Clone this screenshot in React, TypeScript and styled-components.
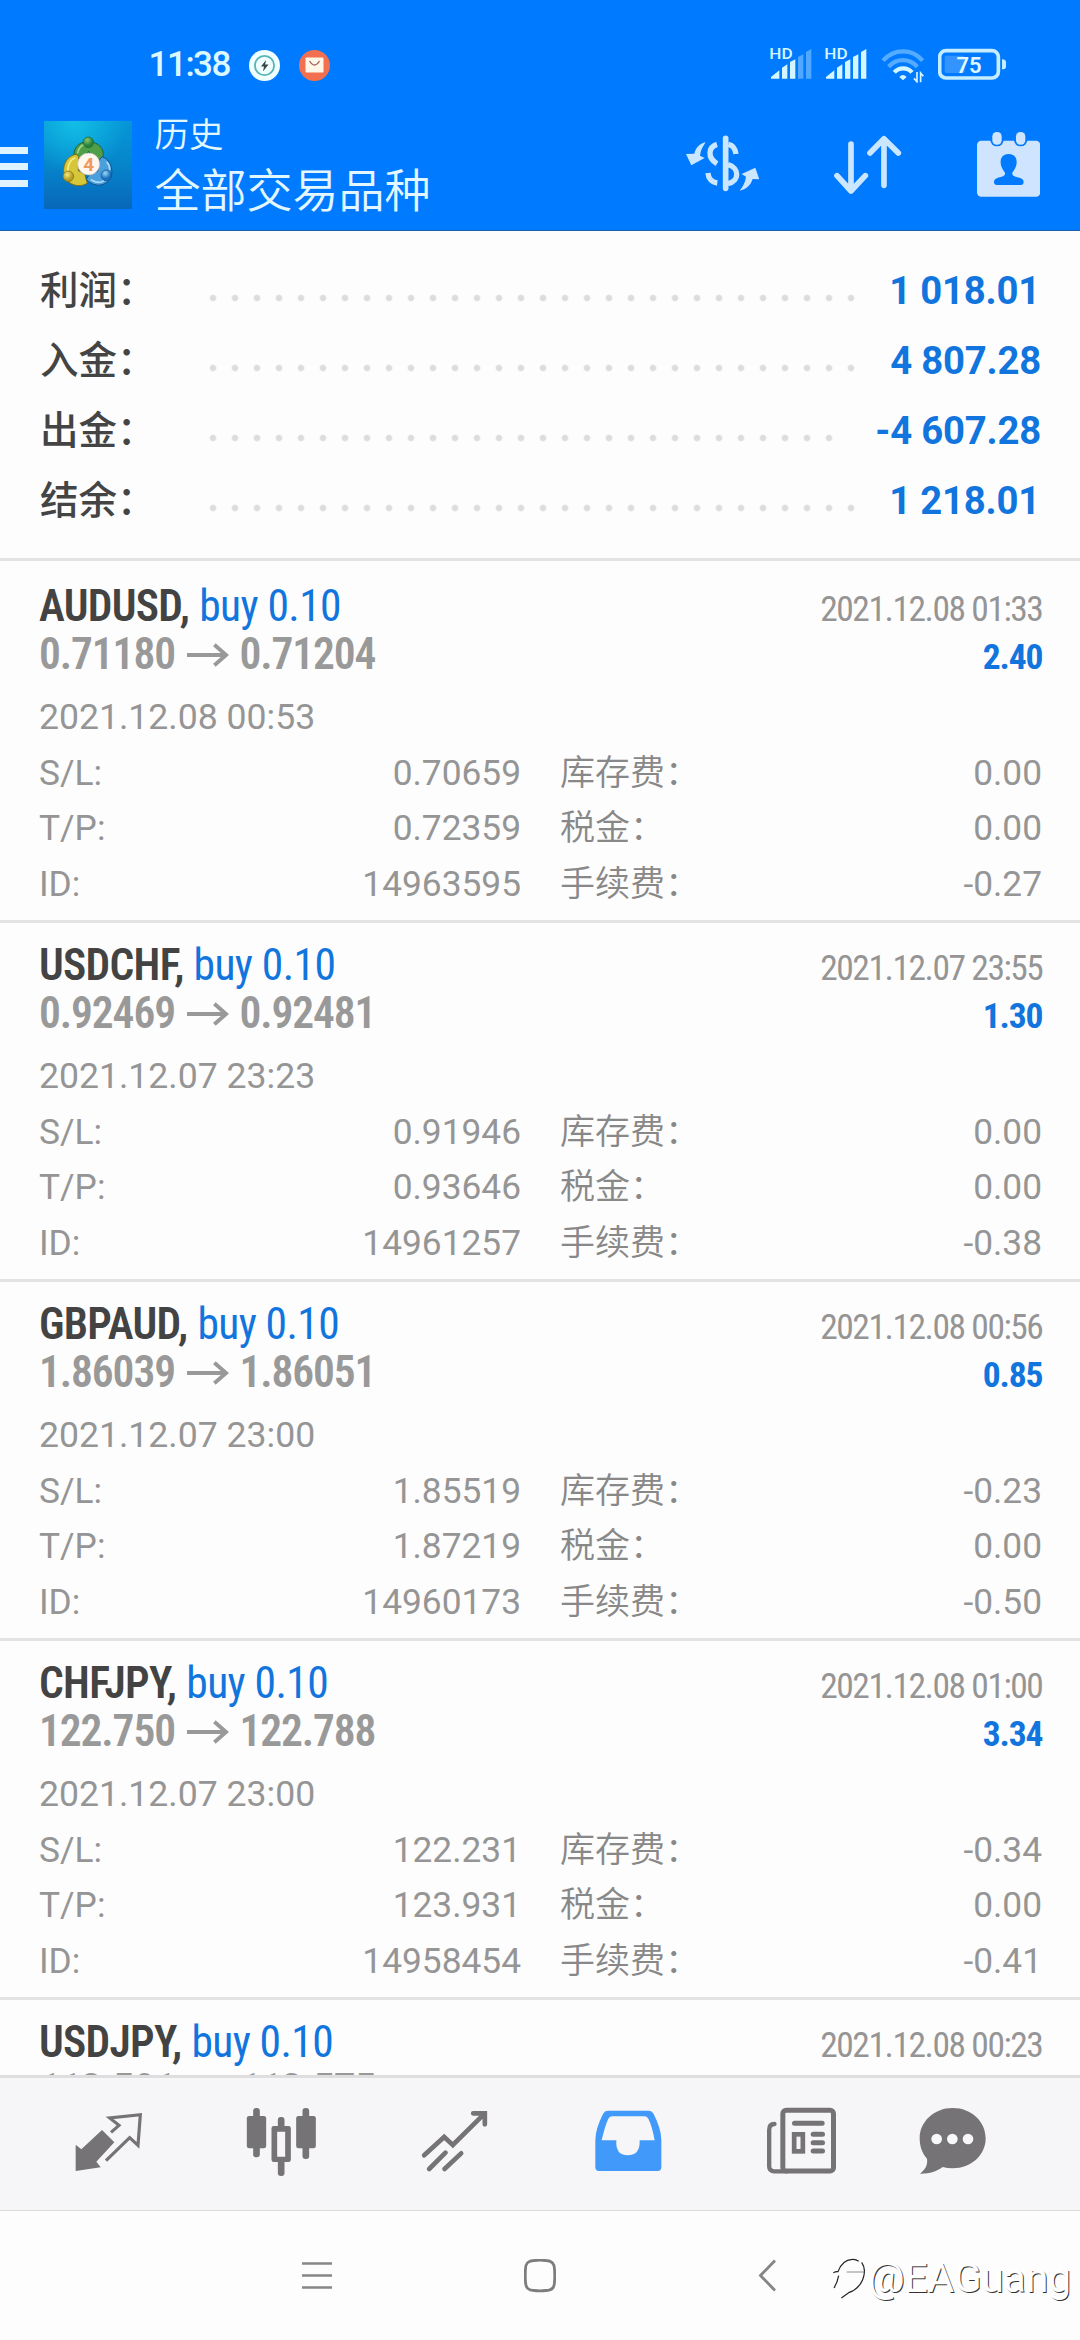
import React from "react";
import styled, { createGlobalStyle } from "styled-components";

const SANS = '"Roboto", "Noto Sans CJK SC", sans-serif';
const CONDENSED = '"Roboto Condensed", "Roboto", "Noto Sans CJK SC", sans-serif';
const BLUE = "#1175dd";
const GREY = "#959595";
const ICON = "#757375";
const PALE = "#cbe6ff";

const GlobalStyle = createGlobalStyle`
  * { box-sizing: border-box; }
  body { margin: 0; background: #fdfdfd; font-family: ${SANS}; }
  svg { display: block; flex: none; }
`;

const Screen = styled.div`
  position: relative;
  display: flex;
  flex-direction: column;
  width: 1080px;
  height: 2340px;
  overflow: hidden;
  background: #fdfdfd;
`;

const Header = styled.header`
  flex: none;
  height: 231px;
  background: #007aff;
  border-bottom: 1px solid #1a62ad;
`;

const StatusBar = styled.div`
  display: flex;
  align-items: center;
  justify-content: space-between;
  height: 102px;
  padding: 28px 73px 0 148.6px;
`;

const StatusGroup = styled.div<{ $gap: number }>`
  display: flex;
  align-items: center;
  gap: ${(p) => p.$gap}px;
`;

const Clock = styled.span`
  width: 81px;
  font: 500 35px/40px ${SANS};
  letter-spacing: -1.5px;
  white-space: nowrap;
  color: #dcf8ff;
`;

const Toolbar = styled.div`
  display: flex;
  height: 128px;
  padding-right: 40px;
`;

const MenuButton = styled.div`
  display: flex;
  flex-direction: column;
  gap: 9.3px;
  width: 28px;
  margin: 44.5px 16px 0 0;
`;

const MenuBar = styled.span`
  height: 7.3px;
  background: #dff4ff;
`;

const LogoBox = styled.div`
  width: 88px;
  height: 88px;
  margin: 19px 22.5px 0 0;
`;

const Titles = styled.div`
  flex: 1;
  padding-top: 6px;
  color: #e2f7ff;
`;

const Subtitle = styled.div`
  font: 350 34.5px/49px ${SANS};
  font-family: "Noto Sans CJK SC", sans-serif;
`;

const Title = styled.div`
  font: 350 46px/60px ${SANS};
  font-family: "Noto Sans CJK SC", sans-serif;
`;

const Actions = styled.div`
  display: flex;
  padding-top: 28px;
  gap: 75px;
`;

const Summary = styled.section`
  flex: none;
  height: 330px;
  padding: 24.5px 39px 0 40px;
  border-bottom: 3px solid #e3e3e3;
`;

const SummaryRow = styled.div`
  display: flex;
  height: 70px;
  line-height: 70px;
`;

const SummaryLabel = styled.span`
  width: 162px;
  font-size: 38.5px;
  font-weight: 500;
  color: #444;
`;

const Dots = styled.span<{ $count: number }>`
  width: ${(p) => p.$count * 22}px;
  height: 22px;
  margin-top: 31px;
  background: radial-gradient(circle at center, #dcdcdc 2.4px, transparent 4px) 0 0 / 22px 22px repeat-x;
`;

const SummaryValue = styled.span<{ $inset: number }>`
  flex: 1;
  padding-right: ${(p) => p.$inset}px;
  text-align: right;
  white-space: nowrap;
  font-size: 38.3px;
  font-weight: 700;
  letter-spacing: -0.2px;
  color: ${BLUE};
`;

const DealList = styled.main`
  height: 1514px;
  padding-top: 3px;
  overflow: hidden;
`;

const Deal = styled.article`
  height: 359px;
  padding: 18.5px 39px 0;
  border-bottom: 3px solid #e3e3e3;
`;

const DealLine = styled.div`
  display: flex;
  align-items: baseline;
  justify-content: space-between;
  height: 48px;
  font-family: ${CONDENSED};
  font-size: 43.5px;
  line-height: 48px;
  white-space: nowrap;
`;

const Symbol = styled.span`
  font-weight: 600;
  letter-spacing: -0.7px;
  color: #434343;
`;

const Side = styled.span`
  letter-spacing: -0.6px;
  color: ${BLUE};
`;

const Prices = styled.span`
  display: flex;
  align-items: baseline;
  font-weight: 600;
  letter-spacing: -1.1px;
  color: #999;
`;

const ArrowIcon = styled.svg`
  margin: 0 10.5px 0 12px;
  align-self: center;
`;

const CloseTime = styled.span`
  font-size: 35.5px;
  letter-spacing: -1.45px;
  margin-right: -1.45px;
  color: ${GREY};
`;

const Profit = styled.span`
  font-size: 35.5px;
  font-weight: 700;
  letter-spacing: -1.2px;
  margin-right: -1.2px;
  color: ${BLUE};
`;

const OpenTime = styled.div`
  margin-top: 10.5px;
  font-size: 35.6px;
  line-height: 56px;
  color: ${GREY};
`;

const Details = styled.div`
  display: grid;
  grid-template-columns: 482px 482px;
  column-gap: 39px;
  padding-top: 0.5px;
  font-size: 35.3px;
  line-height: 55.6px;
  color: ${GREY};
`;

const Detail = styled.div`
  display: flex;
  justify-content: space-between;
  height: 55.6px;
`;

const ChargeLabel = styled.span`
  font-size: 35px;
  font-weight: 350;
  color: #888;
`;

const TabBar = styled.nav`
  display: flex;
  align-items: center;
  flex: none;
  height: 136px;
  padding: 0 0 4px 22px;
  background: #f6f5f7;
  border-top: 3px solid #dededf;
  border-bottom: 1px solid #dcdcdc;
`;

const Tab = styled.div<{ $width: number }>`
  display: flex;
  justify-content: center;
  width: ${(p) => p.$width}px;
`;

const SystemBar = styled.footer`
  display: flex;
  align-items: center;
  flex: 1;
  padding-left: 301px;
`;

const SystemKey = styled.div<{ $gap: number }>`
  margin-right: ${(p) => p.$gap}px;
`;

const Watermark = styled.div`
  position: absolute;
  right: 9px;
  bottom: 37px;
  display: flex;
  align-items: center;
  gap: 3px;
  font: 400 40.500px/50px ${SANS};
  color: #fff;
  text-shadow: 1px 1px 0.500px #333;
`;

const Signal = ({ strong }: { strong?: boolean }) => (
  <svg width="42" height="36.7" viewBox="386 80 126 110" fill="#d4f6ff">
    <text x="384" y="117" fontSize="43" fontWeight="500" fontFamily="Roboto" textLength="70" lengthAdjust="spacingAndGlyphs">HD</text>
    <path d="M389 175V170L414 150V175ZM422 175V142L438 132V175ZM446 175V125L462 117V175Z" />
    <path opacity={strong ? 1 : 0.38} d="M470 175V110L486 102V175ZM494 175V95L510 86V175Z" />
  </svg>
);

const Wifi = () => (
  <svg width="43.3" height="36.7" viewBox="718 80 130 110" fill="none" stroke="#d4f6ff" strokeWidth="13" >
    <g opacity="0.4"><path d="M724 121C757 84 811 84 843 121" /><path d="M741 139C765 113 802 113 827 139" /></g>
    <path d="M758 156C772 140 797 140 811 156" />
    <path d="M773 170Q784 158 795 170L784 180Z" fill="#d4f6ff" stroke="none" />
    <path strokeWidth="5" d="M826 155V184L817 174M837 186V158L845 168" />
  </svg>
);

const Battery = () => (
  <svg width="68.7" height="36.7" viewBox="894 80 206 110">
    <rect x="899" y="91" width="176" height="82" rx="19" fill="none" stroke="#c4edff" strokeWidth="11" />
    <rect x="914" y="106" width="60" height="52" rx="5" fill="#3394ff" />
    <path d="M1086 117Q1098 117 1098 126V139Q1098 147 1086 147Z" fill="#c4edff" />
    <text x="987" y="158" fontSize="66" fontWeight="600" fontFamily="Roboto" textAnchor="middle" fill="#e2f8ff">75</text>
  </svg>
);

const ChargeBadge = () => (
  <svg width="31" height="31" viewBox="0 0 31 31">
    <circle cx="15.5" cy="15.5" r="15.5" fill="#f0ffff" />
    <circle cx="15.5" cy="15.5" r="9.6" fill="none" stroke="#5ab4b4" strokeWidth="1.8" />
    <path d="M17 10L12 16.5H15L14 21.5L19.5 14.5H16.2Z" fill="#3b4648" />
  </svg>
);

const ShopBadge = () => (
  <svg width="31" height="31" viewBox="0 0 31 31">
    <circle cx="15.5" cy="15.5" r="15.5" fill="#f2704f" />
    <rect x="6.5" y="7.5" width="18" height="15" rx="1" fill="#fff6ea" />
    <path d="M10.5 11Q15.5 19 20.5 11" fill="none" stroke="#a4645a" strokeWidth="1.3" />
  </svg>
);

const Logo = () => (
  <svg width="88" height="88" viewBox="42 33 264 264">
    <defs>
      <linearGradient id="sky" x1="0" y1="0" x2="0" y2="1"><stop offset="0" stopColor="#0696d6" /><stop offset="0.5" stopColor="#0685cb" /><stop offset="1" stopColor="#0867b9" /></linearGradient>
      <radialGradient id="glow" cx="0.35" cy="0" r="0.6"><stop offset="0" stopColor="#12bfe6" /><stop offset="1" stopColor="#12bfe6" stopOpacity="0" /></radialGradient>
      <radialGradient id="green" cx="0.4" cy="0.3"><stop offset="0" stopColor="#8cc76d" /><stop offset="1" stopColor="#28813c" /></radialGradient>
      <radialGradient id="gold" cx="0.4" cy="0.35"><stop offset="0" stopColor="#f3e978" /><stop offset="1" stopColor="#b39a22" /></radialGradient>
      <radialGradient id="azure" cx="0.4" cy="0.3"><stop offset="0" stopColor="#9bd8f7" /><stop offset="1" stopColor="#1971be" /></radialGradient>
    </defs>
    <rect x="42" y="33" width="264" height="264" fill="url(#sky)" />
    <rect x="42" y="33" width="264" height="264" fill="url(#glow)" />
    <g strokeWidth="3">
      <path d="M136 152C122 118 146 94 176 95S229 118 216 152L200 160L176 124L150 158Z" fill="#4f9f48" stroke="#1d6434" />
      <path d="M139 133C106 137 91 178 108 207C124 231 158 231 172 219L164 192L145 182L146 140Z" fill="#d6c63a" stroke="#7e6c17" />
      <path d="M216 140C246 150 254 192 236 212C217 233 185 228 169 208L180 190L203 184L208 150Z" fill="#4a9fdc" stroke="#14508d" />
    </g>
    <g fill="none" strokeWidth="5" strokeLinecap="round">
      <path d="M143 128Q149 107 163 104" stroke="#a5d68a" />
      <path d="M113 183Q115 151 134 144" stroke="#f7ed86" />
      <path d="M231 157Q239 165 239 178M184 210Q203 222 221 213" stroke="#a8dbf7" />
    </g>
    <circle cx="175" cy="97" r="16" fill="url(#green)" stroke="#1d6434" strokeWidth="2" />
    <circle cx="115" cy="199" r="16" fill="url(#gold)" stroke="#7e6c17" strokeWidth="2" />
    <circle cx="229" cy="196" r="16" fill="url(#azure)" stroke="#14508d" strokeWidth="2" />
    <circle cx="176" cy="162" r="33" fill="#fff6ee" stroke="#c9bba9" strokeWidth="2" />
    <text x="176" y="182" textAnchor="middle" fontFamily="Roboto" fontWeight="700" fontSize="57" fill="#ef9a5d">4</text>
  </svg>
);

const CurrencyIcon = () => (
  <svg width="73.300" height="68" viewBox="136 330 220 204" fill="none" stroke={PALE} strokeWidth="15">
    <path d="M255 355V505" strokeWidth="17" strokeLinecap="round" />
    <path d="M229 373C203 381 199 413 229 431M263 373C275 375 284 386 286 402M262 434C296 442 298 484 262 491M202 459C203 475 213 487 230 489" strokeWidth="16" />
    <path stroke="none" fill={PALE} d="M195 367C177 371 165 383 161 401L136 402L152 436L192 414L178 407C180 391 186 380 195 367ZM297 512C316 508 330 497 336 477L356 478L344 443L303 462L316 470C314 488 306 501 297 512Z" />
  </svg>
);

const SortIcon = () => (
  <svg width="67.300" height="68" viewBox="575 330 202 204" fill="none" stroke={PALE} strokeWidth="17" strokeLinecap="round" strokeLinejoin="round">
    <path d="M626 372V510M584 467L626 513L669 467M725 496V358M683 399L725 356L768 399" />
  </svg>
);

const CalendarIcon = () => (
  <svg width="63.300" height="68" viewBox="1009 330 190 204">
    <rect x="1009" y="362" width="190" height="168" rx="13" fill="#cfe4ff" />
    <g fill="#007aff">
      <rect x="1049" y="330" width="40" height="49" rx="19" />
      <rect x="1120" y="330" width="40" height="49" rx="19" />
      <path d="M1104 402C1123 402 1129 415 1128 430C1127 443 1119 452 1115 458C1113 466 1121 470 1131 472Q1149 475 1149 486Q1149 495 1140 495H1069Q1060 495 1060 486Q1060 475 1077 472C1087 470 1095 466 1093 458C1089 452 1081 443 1080 430C1079 415 1085 402 1104 402Z" />
    </g>
    <g fill="#cfe4ff"><rect x="1055" y="336" width="28" height="38" rx="13" /><rect x="1126" y="336" width="28" height="38" rx="13" /></g>
  </svg>
);

const QuotesIcon = () => (
  <svg width="75" height="75" viewBox="93 135 225 225">
    <path d="M107 254L124 268L186 210L223 247L169 305L182 322L107 333Z" fill={ICON} />
    <path d="M213 217L237 196L209 174L301 164L294 256L269 233L198 302" fill="none" stroke={ICON} strokeWidth="9.500" />
  </svg>
);

const ChartIcon = () => (
  <svg width="75" height="75" viewBox="611.5 135 225 225" fill={ICON}>
    <rect x="639" y="144" width="20" height="148" rx="9" /><rect x="620" y="168" width="58" height="97" rx="7" />
    <rect x="787" y="144" width="20" height="153" rx="9" /><rect x="768" y="168" width="59" height="97" rx="7" />
    <rect x="713" y="171" width="20" height="40" rx="9" /><rect x="713" y="295" width="20" height="53" rx="9" />
    <path fillRule="evenodd" d="M701 198H745Q752 198 752 205V299Q752 306 745 306H701Q694 306 694 299V205Q694 198 701 198ZM711 215V290H735V215Z" />
  </svg>
);

const TrendIcon = () => (
  <svg width="75" height="75" viewBox="1129.5 135 225 225" fill="none" stroke={ICON} strokeWidth="14" strokeLinecap="round">
    <path d="M1151 286L1211 231L1237 255L1329 164M1298 160H1333V193M1166 327L1215 278M1212 327L1262 280" />
  </svg>
);

const InboxIcon = () => (
  <svg width="75" height="75" viewBox="31 45 225 225" fill="#419af9">
    <path fillRule="evenodd" d="M82 62H203Q214 62 219 72Q242 117 242 151V232Q242 243 231 243H55Q44 243 44 232V151Q44 117 67 72Q72 62 82 62ZM95 79Q87 79 83 86Q73 107 63 151H107Q104 196 141 196Q179 196 177 151H222Q214 107 203 86Q199 79 191 79Z" />
  </svg>
);

const NewsIcon = () => (
  <svg width="75" height="75" viewBox="551.5 45 225 225" fill="none" stroke={ICON} strokeLinecap="round">
    <rect x="608" y="61" width="152" height="182" rx="10" strokeWidth="15" />
    <path strokeWidth="13" d="M583 102Q567 102 567 120V229Q567 243 581 244H620" />
    <path strokeWidth="15" d="M643 100H726M699 133H727M699 158H727M699 183H727" />
    <rect x="642" y="133" width="26" height="51" strokeWidth="14" />
  </svg>
);

const ChatIcon = () => (
  <svg width="75" height="75" viewBox="1006 45 225 225">
    <path fill={ICON} d="M1119 54C1176 54 1218 95 1218 145C1218 196 1174 235 1119 235Q1103 235 1089 231C1072 244 1046 252 1021 251C1036 239 1045 225 1042 206C1027 190 1020 168 1020 145C1020 95 1063 54 1119 54Z" />
    <g fill="#f8f7f9"><circle cx="1071" cy="147" r="16" /><circle cx="1118" cy="147" r="16" /><circle cx="1165" cy="147" r="16" /></g>
  </svg>
);

const summary = [
  { label: "利润：", value: "1 018.01", dots: 30, inset: 1 },
  { label: "入金：", value: "4 807.28", dots: 30, inset: 0 },
  { label: "出金：", value: "-4 607.28", dots: 29, inset: 0 },
  { label: "结余：", value: "1 218.01", dots: 30, inset: 1 },
];

type DealData = {
  symbol: string; open: string; close: string; closeTime: string; profit: string;
  openTime: string; sl: string; tp: string; id: string; swap: string; tax: string; fee: string;
};

const deals: DealData[] = [
  { symbol: "AUDUSD", open: "0.71180", close: "0.71204", closeTime: "2021.12.08 01:33", profit: "2.40", openTime: "2021.12.08 00:53", sl: "0.70659", tp: "0.72359", id: "14963595", swap: "0.00", tax: "0.00", fee: "-0.27" },
  { symbol: "USDCHF", open: "0.92469", close: "0.92481", closeTime: "2021.12.07 23:55", profit: "1.30", openTime: "2021.12.07 23:23", sl: "0.91946", tp: "0.93646", id: "14961257", swap: "0.00", tax: "0.00", fee: "-0.38" },
  { symbol: "GBPAUD", open: "1.86039", close: "1.86051", closeTime: "2021.12.08 00:56", profit: "0.85", openTime: "2021.12.07 23:00", sl: "1.85519", tp: "1.87219", id: "14960173", swap: "-0.23", tax: "0.00", fee: "-0.50" },
  { symbol: "CHFJPY", open: "122.750", close: "122.788", closeTime: "2021.12.08 01:00", profit: "3.34", openTime: "2021.12.07 23:00", sl: "122.231", tp: "123.931", id: "14958454", swap: "-0.34", tax: "0.00", fee: "-0.41" },
];

const DealHead = ({ symbol, closeTime }: { symbol: string; closeTime: string }) => (
  <DealLine>
    <span><Symbol>{symbol},</Symbol> <Side>buy 0.10</Side></span>
    <CloseTime>{closeTime}</CloseTime>
  </DealLine>
);

const PriceMove = ({ open, close }: { open: string; close: string }) => (
  <Prices>
    <span>{open}</span>
    <ArrowIcon width="42" height="24" viewBox="0 0 43 24" fill="none" stroke="#999" strokeWidth="4">
      <path d="M0 12H40M28 1.500L40 12L28 22.500" />
    </ArrowIcon>
    <span>{close}</span>
  </Prices>
);

const DealCard = ({ deal }: { deal: DealData }) => (
  <Deal>
    <DealHead symbol={deal.symbol} closeTime={deal.closeTime} />
    <DealLine>
      <PriceMove open={deal.open} close={deal.close} />
      <Profit>{deal.profit}</Profit>
    </DealLine>
    <OpenTime>{deal.openTime}</OpenTime>
    <Details>
      <Detail><span>S/L:</span><span>{deal.sl}</span></Detail>
      <Detail><ChargeLabel>库存费：</ChargeLabel><span>{deal.swap}</span></Detail>
      <Detail><span>T/P:</span><span>{deal.tp}</span></Detail>
      <Detail><ChargeLabel>税金：</ChargeLabel><span>{deal.tax}</span></Detail>
      <Detail><span>ID:</span><span>{deal.id}</span></Detail>
      <Detail><ChargeLabel>手续费：</ChargeLabel><span>{deal.fee}</span></Detail>
    </Details>
  </Deal>
);

const tabs = [
  { icon: <QuotesIcon />, width: 173.2 },
  { icon: <ChartIcon />, width: 173.2 },
  { icon: <TrendIcon />, width: 173.2 },
  { icon: <InboxIcon />, width: 173.2 },
  { icon: <NewsIcon />, width: 173.2 },
  { icon: <ChatIcon />, width: 129.6 },
];

export default function App() {
  return (
    <Screen>
      <GlobalStyle />
      <Header>
        <StatusBar>
          <StatusGroup $gap={19}>
            <Clock>11:38</Clock>
            <ChargeBadge />
            <ShopBadge />
          </StatusGroup>
          <StatusGroup $gap={13.8}>
            <Signal />
            <Signal strong />
            <Wifi />
            <Battery />
          </StatusGroup>
        </StatusBar>
        <Toolbar>
          <MenuButton><MenuBar /><MenuBar /><MenuBar /></MenuButton>
          <LogoBox><Logo /></LogoBox>
          <Titles>
            <Subtitle>历史</Subtitle>
            <Title>全部交易品种</Title>
          </Titles>
          <Actions><CurrencyIcon /><SortIcon /><CalendarIcon /></Actions>
        </Toolbar>
      </Header>

      <Summary>
        {summary.map((row) => (
          <SummaryRow key={row.label}>
            <SummaryLabel>{row.label}</SummaryLabel>
            <Dots $count={row.dots} />
            <SummaryValue $inset={row.inset}>{row.value}</SummaryValue>
          </SummaryRow>
        ))}
      </Summary>

      <DealList>
        {deals.map((deal) => <DealCard key={deal.id} deal={deal} />)}
        <Deal>
          <DealHead symbol="USDJPY" closeTime="2021.12.08 00:23" />
          <DealLine><PriceMove open="113.501" close="113.575" /></DealLine>
        </Deal>
      </DealList>

      <TabBar>
        {tabs.map((tab, i) => <Tab key={i} $width={tab.width}>{tab.icon}</Tab>)}
      </TabBar>

      <SystemBar>
        <SystemKey $gap={191}>
          <svg width="32" height="34" viewBox="0 0 32 34" stroke="#868686" strokeWidth="2.600"><path d="M1 4.500H31M1 16.500H31M1 28.500H31" /></svg>
        </SystemKey>
        <SystemKey $gap={202}>
          <svg width="32" height="34" viewBox="0 0 32 34" fill="none" stroke="#7d7d7d" strokeWidth="2.800"><path d="M1.500 10Q1.500 1.500 10 1.500Q16 0.800 22 1.500Q30.500 1.500 30.500 10Q31 16 30.500 23Q30.500 31.500 22 31.500Q16 32.300 10 31.500Q1.500 31.500 1.500 23Q1 16 1.500 10Z" /></svg>
        </SystemKey>
        <SystemKey $gap={0}>
          <svg width="20" height="34" viewBox="0 0 20 34" fill="none" stroke="#858585" strokeWidth="2.800"><path d="M17 1.500L2.500 16.500L17 31.500" /></svg>
        </SystemKey>
      </SystemBar>

      <Watermark>
        <svg width="33" height="42" viewBox="272 65 99 126" fill="none" stroke="#222" strokeWidth="3.500">
          <path d="M276 112Q283 108 290 109Q302 74 333 72Q343 71 352 78M361 81Q376 103 364 133Q352 162 322 172L300 188M292 121Q288 143 278 158" />
          <path d="M316 110H370" stroke="#777" strokeWidth="2.500" />
        </svg>
        <span>@EAGuang</span>
      </Watermark>
    </Screen>
  );
}
